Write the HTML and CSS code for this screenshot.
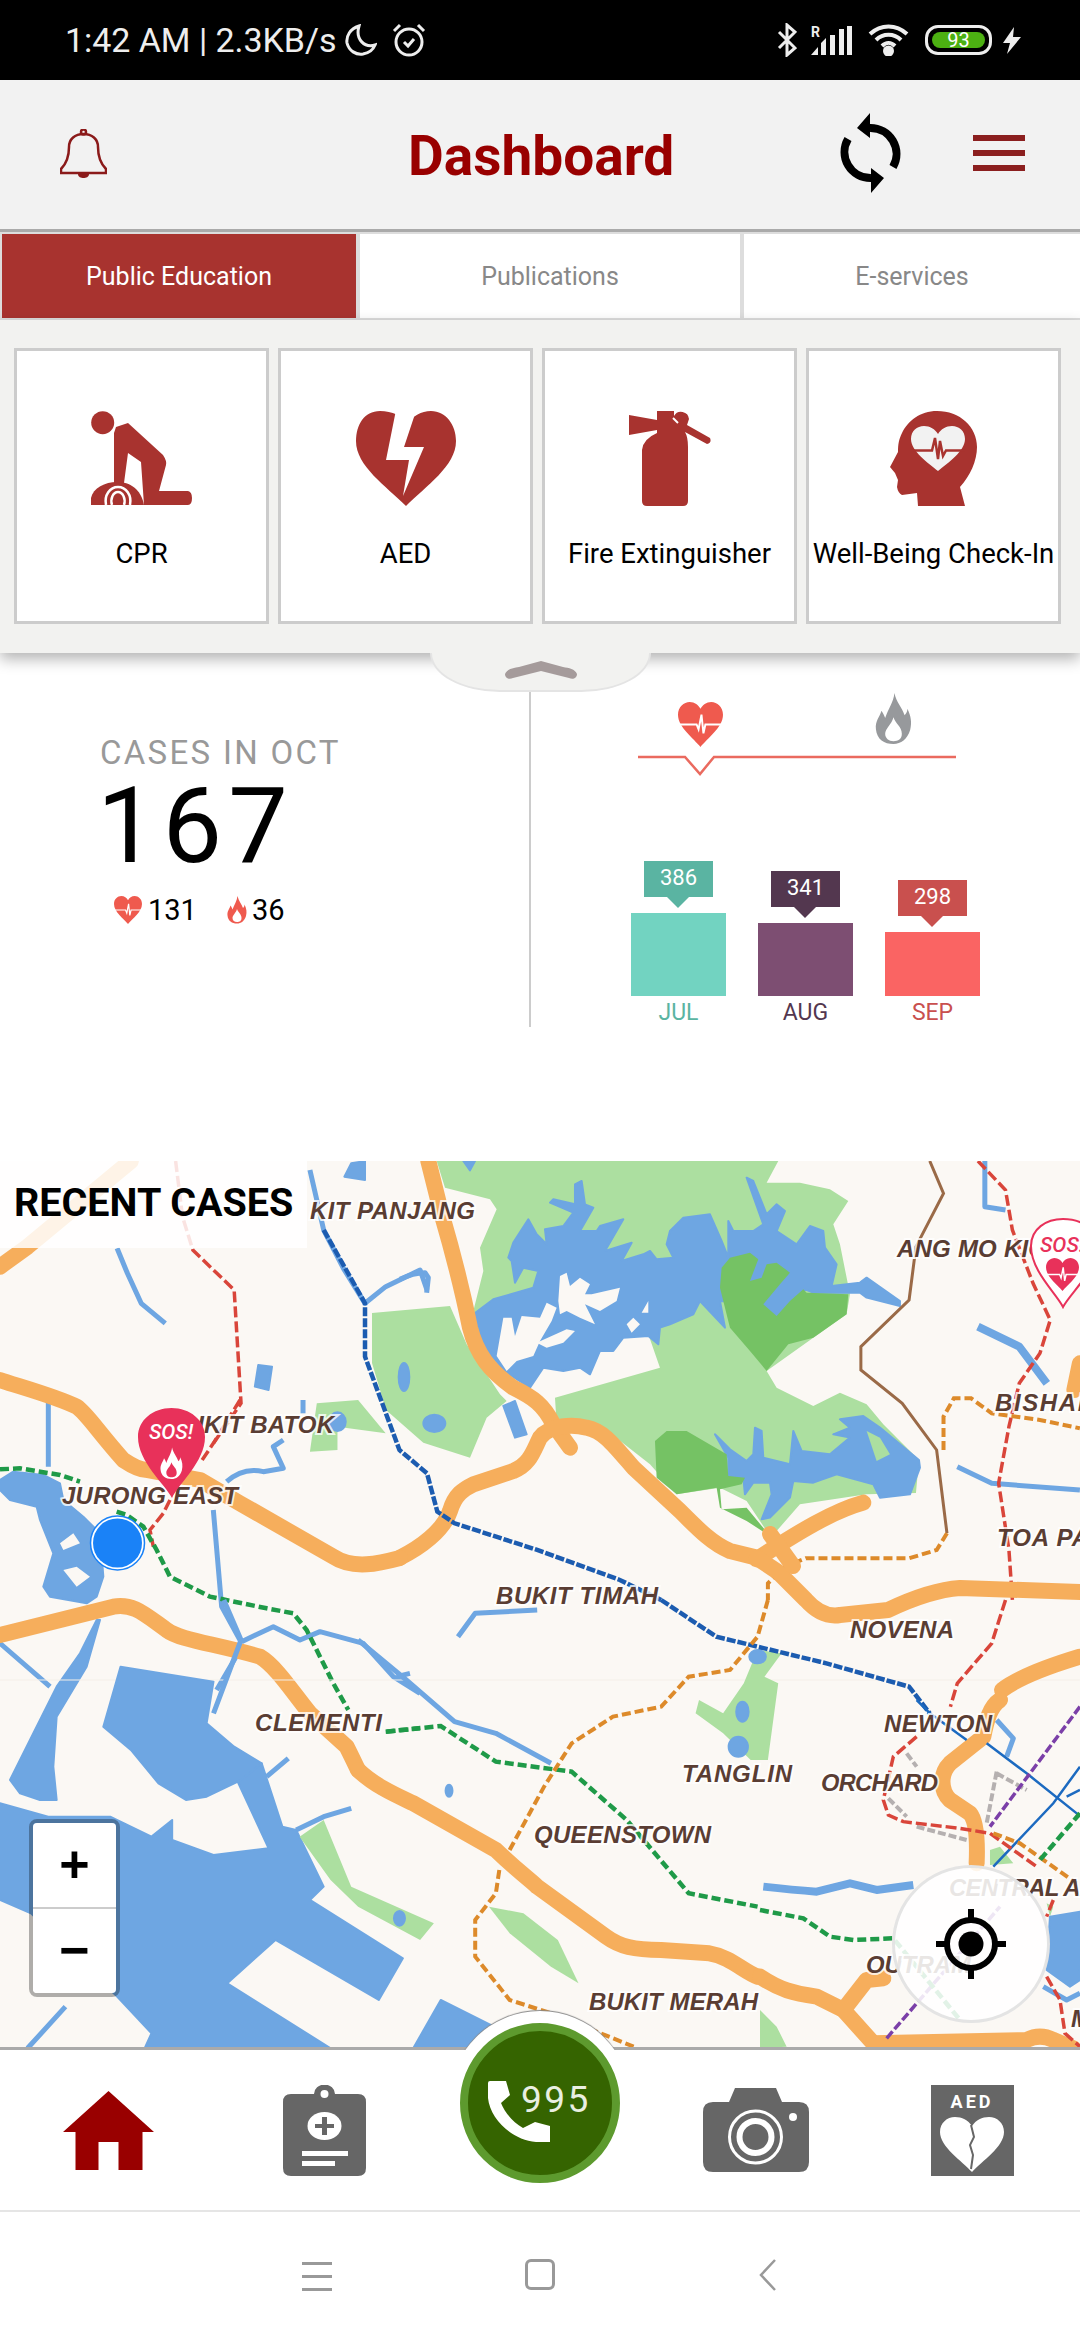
FILE: index.html
```html
<!DOCTYPE html>
<html lang="en">
<head>
    <meta charset="UTF-8">
    <meta name="viewport" content="width=device-width, initial-scale=1.0">
    <title>Dashboard</title>
    <link rel="stylesheet" href="styles.css">
</head>
<body>
    <svg class="defs" width="0" height="0">
        <symbol id="ecg-heart" viewBox="0 0 46 46">
            <path d="M23 46 C16 37 0 26 0 13 C0 5 6 0 12 0 C17 0 21 3 23 7 C25 3 29 0 34 0 C40 0 46 5 46 13 C46 26 30 37 23 46Z"/>
            <path class="ecg" d="M0 23 H19 L21 28 L24 13 L26 32 L28 23 H46"/>
        </symbol>
        <symbol id="flame" viewBox="0 0 40 56">
            <path fill-rule="evenodd" d="M21 0 C23 10 29 15 32 24 C34 22 35 20 35 17 C39 25 40 32 38 40 C35 50 28 55 20 55 C10 55 2 50 1 39 C0 30 5 26 7 19 C9 22 10 24 11 27 C14 18 20 10 21 0Z M20 26 C22 33 29 36 29 44 C29 50 25 52 20 52 C15 52 11 49 11 44 C11 38 18 34 20 26Z"/>
        </symbol>
    </svg>

    <!-- Status bar -->
    <div class="status-bar">
        <div class="status-left">
            <span class="status-text">1:42 AM | 2.3KB/s</span>
            <svg class="st-moon" viewBox="0 0 33 32"><path d="M15 2 C6 5 2 12 3 19 C5 27 12 31 19 30 C25 29 29 26 31 21 C21 24 11 16 15 2Z"/></svg>
            <svg class="st-alarm" viewBox="0 0 34 34"><circle cx="17" cy="19" r="13"/><path d="M12 19 L16 23 L22 16 M2 8 L8 2 M32 8 L26 2"/></svg>
        </div>
        <div class="status-right">
            <svg class="st-bt" viewBox="0 0 20 34"><path d="M2 9 L18 25 L10 32 V2 L18 9 L2 25"/></svg>
            <div class="st-signal">
                <span class="st-r">R</span>
                <svg viewBox="0 0 41 29"><path d="M0 29 L7 21 V29Z M10 29 V17 L15 12 V29Z M19 29 V9 H24 V29Z M28 29 V3 H33 V29Z M36 29 V0 H41 V29Z"/></svg>
            </div>
            <svg class="st-wifi" viewBox="0 0 41 32"><path d="M2 10 C13 0 28 0 39 10 M8 16 C15 9 26 9 33 16 M14 22 C18 18 23 18 27 22"/><circle cx="20.500" cy="27" r="3.500"/></svg>
            <div class="st-battery"><span class="st-level">93</span></div>
            <svg class="st-bolt" viewBox="0 0 18 27"><path d="M11 0 L0 16 H7 L4 27 L18 10 H10Z"/></svg>
        </div>
    </div>

    <!-- Header -->
    <header class="app-header">
        <svg class="bell" viewBox="0 0 47 49">
            <circle cx="23.500" cy="3" r="2.500"/>
            <path d="M1 44 H46 V40 C40 34 38 28 38 18 C38 10 32 5 23.500 5 C15 5 9 10 9 18 C9 28 7 34 1 40Z"/>
            <path class="clapper" d="M18 45 H29 C29 48 26 49 23.500 49 C21 49 18 48 18 45Z"/>
        </svg>
        <h1 class="app-title">Dashboard</h1>
        <svg class="sync" viewBox="0 0 61 80">
            <path class="sync-arc" d="M30 15 A26 26 0 0 1 53 54"/>
            <path class="sync-arc" d="M31 65 A26 26 0 0 1 8 26"/>
            <path d="M30 0 L17 15 L30 25Z M31 80 L44 65 L31 55Z"/>
        </svg>
        <div class="hamburger"><span></span><span></span><span></span></div>
    </header>

    <!-- Tabs -->
    <nav class="tabs">
        <div class="tab active">Public Education</div>
        <div class="tab">Publications</div>
        <div class="tab">E-services</div>
    </nav>

    <section class="panel">
        <div class="card">
            <svg class="card-icon" viewBox="0 0 101 96">
                <circle cx="11.700" cy="11.700" r="11.500"/>
                <path d="M25 16 L37 12 L72 44 Q76 50 75 54 L68 80 H97 Q101 81 101 87 Q101 94 97 94 H53 L50 51 L37 42 L33 72 H23 V22Z"/>
                <path d="M0 94 V87 C2 77 14 71 26 71 C39 71 50 78 53 94Z"/>
                <path class="cut" d="M15 94 C13 84 19 76 27 76 C35 76 41 84 39 94 M21 94 C19 88 22 81 27 81 C32 81 35 88 33 94"/>
            </svg>
            <span class="card-label">CPR</span>
        </div>
        <div class="card">
            <svg class="card-icon" viewBox="0 0 100 96">
                <path d="M24 0 C8 0 0 14 0 30 C0 55 30 75 50 95 C70 75 100 55 100 30 C100 14 90 0 75 0 C65 0 57 5 52 12 C47 5 36 0 24 0Z"/>
                <path class="white" d="M40 -1 L30 49 H53 L47 85 L68 36 H48 L58 6 L50 -1Z"/>
            </svg>
            <span class="card-label">AED</span>
        </div>
        <div class="card">
            <svg class="card-icon" viewBox="0 0 82 96">
                <path d="M0 4 L28 9 V0 H45 V5 A8 8 0 0 1 60 8 L58 14 L81 27 Q83 32 78 33 L56 21 Q59 26 59 36 V90 Q59 95 54 95 H18 Q13 95 13 90 V39 Q14 28 28 22 V19 L0 24Z"/>
                <path class="nick" d="M44 7 L49 12"/>
            </svg>
            <span class="card-label">Fire Extinguisher</span>
        </div>
        <div class="card">
            <svg class="card-icon" viewBox="0 0 87 96">
                <path d="M47 0 C70 0 87 16 87 36 C87 50 80 65 70 76 L75 95 H28 L27 82 L12 84 Q8 82 7 76 L8 69 L5 62 L0 56 L8 41 C8 33 9 28 12 22 C18 10 30 0 47 0Z"/>
                <path class="pale" d="M48 60 C38 52 21 40 21 28 C21 20 27 15 34 15 C40 15 45 18 48 23 C51 18 56 15 62 15 C69 15 75 20 75 28 C75 40 58 52 48 60Z"/>
                <path class="pulse" d="M21 39.500 H42 L45 27 L48 48 L50 30 L53 45 L56 39.500 H75"/>
            </svg>
            <span class="card-label">Well-Being Check-In</span>
        </div>
    </section>

    <div class="handle">
        <svg class="handle-mark" viewBox="0 0 72 18"><path d="M0 13 C2 8 8 7 14 6 L36 0 L58 6 C64 7 70 8 72 13 C72 17 68 19 64 17 L36 10 L8 17 C4 19 0 17 0 13Z"/></svg>
    </div>

    <!-- Stats -->
    <section class="stats">
        <div class="stats-left">
            <div class="cases-title">CASES IN OCT</div>
            <div class="cases-total">167</div>
            <div class="cases-split">
                <svg class="split-heart"><use href="#ecg-heart"/></svg>
                <span>131</span>
                <svg class="split-flame"><use href="#flame"/></svg>
                <span>36</span>
            </div>
        </div>
        <div class="stats-right">
            <div class="type-icons">
                <svg class="type-heart"><use href="#ecg-heart"/></svg>
                <svg class="type-flame"><use href="#flame"/></svg>
            </div>
            <svg class="rail" viewBox="0 0 318 26"><path d="M0 7 H47 L62 24 L76 7 H318"/></svg>
            <div class="chart">
                <div class="col jul">
                    <div class="tip">386</div>
                    <div class="bar" style="height:83px"></div>
                    <div class="month">JUL</div>
                </div>
                <div class="col aug">
                    <div class="tip">341</div>
                    <div class="bar" style="height:73px"></div>
                    <div class="month">AUG</div>
                </div>
                <div class="col sep">
                    <div class="tip">298</div>
                    <div class="bar" style="height:64px"></div>
                    <div class="month">SEP</div>
                </div>
            </div>
        </div>
    </section>

    <!-- Map -->
    <section class="map">
        <svg class="map-art" viewBox="0 1161 1080 886" width="1080" height="886">
            <rect class="land" x="0" y="1161" width="1080" height="886"/>

            <!-- reserves -->
            <g transform="translate(400 1161) scale(.3333)">
                <path class="park" d="M110 0 L1135 0 L1100 65 L1200 65 L1290 85 L1345 120 L1300 190 L1320 250 L1350 400 L1340 460 L1240 530 L1100 630 L1130 680 L1240 735 L1320 695 L1400 730 L1450 790 L1557 897 L1548 996 L1400 1000 L1200 1030 L1130 1110 L1100 1110 L1040 1020 L960 980 L830 1000 L750 910 L610 800 L470 790 L465 710 L780 620 L745 520 L650 400 L490 340 L300 470 L290 590 L230 480 L220 450 L250 330 L240 260 L290 145 L270 115 L135 80Z"/>
                <path class="park" d="M-84 456 L150 435 L200 550 L300 700 L320 720 L260 770 L210 890 L70 845 L-42 747 L-84 606Z"/>

                <path class="water" d="M325 290 L340 245 L385 175 L410 220 L440 250 L435 205 L490 195 L520 155 L450 125 L460 115 L525 130 L525 70 L545 60 L555 130 L580 140 L540 210 L590 210 L600 195 L670 175 L615 270 L695 245 L665 300 L730 280 L750 270 L770 295 L820 290 L800 250 L810 210 L850 170 L930 160 L965 240 L985 290 L985 180 L1000 210 L1060 210 L1090 190 L1040 50 L1060 60 L1100 160 L1130 130 L1155 150 L1130 210 L1190 250 L1230 195 L1270 210 L1275 260 L1310 310 L1295 375 L1380 365 L1400 350 L1500 420 L1500 435 L1400 410 L1380 395 L1240 395 L1215 385 L1170 440 L1135 465 L1070 430 L960 420 L975 500 L900 420 L880 460 L810 490 L780 500 L775 550 L745 525 L670 530 L640 570 L600 570 L570 640 L540 620 L490 630 L430 620 L390 680 L320 635 L250 560 L220 460 L280 415 L400 380 L415 330 L370 320 L345 365 L335 300Z"/>
                <path class="island" d="M290 585 L310 470 L335 470 L345 525 L365 465 L420 470 L440 425 L470 440 L455 480 L420 540 L400 585 L350 600 L320 630Z"/>
                <path class="island" d="M480 345 L500 335 L510 375 L540 350 L570 370 L555 400 L575 400 L660 380 L650 420 L600 450 L555 430 L585 490 L540 470 L500 450 L480 460 L475 420Z"/>
                <path class="island" d="M410 545 L500 505 L525 510 L490 545 L440 560Z M680 490 L700 470 L720 490 L695 515Z M725 455 L745 420 L745 455Z"/>

                <path class="park-dark" d="M960 380 L965 320 L990 290 L1050 275 L1075 295 L1050 360 L1085 350 L1100 310 L1130 305 L1170 335 L1140 370 L1090 430 L1130 465 L1170 420 L1210 385 L1220 395 L1345 400 L1340 460 L1240 530 L1165 550 L1100 630 L1050 570 L990 500Z"/>

                <path class="water" d="M945 820 L990 865 L1040 900 L1060 880 L1065 800 L1085 810 L1090 890 L1170 910 L1180 810 L1205 870 L1290 880 L1350 830 L1300 820 L1350 800 L1320 775 L1390 765 L1440 800 L1557 897 L1560 920 L1530 1000 L1440 1010 L1420 970 L1310 940 L1240 965 L1180 960 L1170 1010 L1110 1070 L1085 1075 L1115 1000 L1110 965 L1060 965 L1035 1000 L1030 950 L985 945 L985 890Z"/>
                <path class="park" d="M1400 810 L1440 830 L1470 880 L1430 900Z"/>
                <path class="park-dark" d="M765 840 L800 810 L860 810 L980 880 L985 945 L1035 950 L1025 970 L960 985 L965 1045 L1040 1040 L1110 1125 L1040 1080 L960 1040 L950 980 L830 1000 L770 950Z"/>

                <ellipse class="water" cx="103" cy="787" rx="33" ry="26"/>
                <ellipse class="water" cx="12" cy="648" rx="16" ry="42"/>
                <path class="water" d="M310 735 L345 720 L380 820 L345 830Z M190 0 L225 0 L210 28Z"/>
                <path class="river" d="M0 355 Q40 335 75 335 L85 350 L80 395"/>

                <path class="road" d="M85 0 L125 160 C160 280 190 400 210 500 C230 580 270 630 340 680 C400 710 430 730 460 790 L510 860"/>
                <path class="road" d="M0 1190 C60 1160 130 1110 150 1050 C165 1000 190 985 220 970 L340 930 C390 910 400 870 420 830 C450 790 520 790 560 800 C610 810 640 850 700 920 L840 1050 C900 1110 940 1150 990 1170 L1070 1190"/>
                <path class="road" d="M1390 1025 C1300 1050 1200 1110 1070 1195"/>
            </g>

            <!-- north side -->
            <g transform="matrix(.6887 0 0 .3333 0 1150)">
                <path class="park" d="M450 905 L460 760 L520 750 L560 850 L490 830 L490 900Z"/>
                <path class="water" d="M375 645 L395 650 L390 720 L370 710Z M510 40 L530 33 L530 90 L500 80Z"/>
                <ellipse class="water" cx="490" cy="815" rx="12" ry="28"/>
                <path class="river" d="M170 295 L185 370 L205 460 L240 520"/>
                <path class="river" d="M450 60 L470 240 L500 360 L530 460 L560 410 L610 360 L620 420"/>
                <path class="river" d="M1390 950 L1440 1000 L1568 1020 M1430 33 L1430 170 L1460 180"/>
                <path class="river-wide" d="M1420 530 L1480 590 L1520 700"/>
                <path class="river" d="M440 750 V790"/>
                <path class="road" d="M0 350 L40 290 L190 33"/>
                <path class="road" d="M1568 640 L1560 720"/>

                <path class="rail-red" d="M1420 33 L1460 120 L1470 240 L1500 400 L1525 510 L1510 610 L1480 700 L1465 830 L1450 1000 L1465 1200 L1470 1350"/>
                <path class="rail-red" d="M255 33 L265 200 L280 300 L340 420 L350 760 L310 880"/>
                <path class="rail-brown" d="M1350 33 L1370 130 L1330 290 L1320 450 L1250 590 L1250 660 L1310 760 L1360 900 L1375 1150"/>
                <path class="rail-orange" d="M1370 900 L1370 800 L1385 745 L1410 745 L1440 790 L1510 810 L1568 835 M1375 1150 L1360 1200 L1320 1225 L1170 1225 L1140 1250 L1115 1300 L1115 1350"/>
                <path class="rail-blue" d="M470 240 L530 460 L530 620 L580 900 L620 970 L635 1085 L660 1120 L780 1200 L900 1290 L960 1350"/>
            </g>

            <!-- jurong -->
            <g transform="translate(0 1400) scale(.3333)">
                <path class="water" d="M0 240 L40 215 L130 225 L180 250 L190 300 L250 350 L300 400 L310 530 L290 590 L260 610 L150 590 L130 560 L160 460 L120 360 L110 320 L30 300 L0 270Z"/>
                <path class="island" d="M180 430 L220 400 L240 430 L190 450Z M190 510 L230 500 L270 530 L230 560Z"/>
                <path class="water" d="M290 660 L240 760 L170 860 L100 1000 L30 1140 L60 1180 L120 1200 L170 1200 L160 1100 L170 950 L260 800 L300 660Z"/>
                <path class="river" d="M145 0 V200 M640 330 L665 620 L720 720 M680 245 Q730 200 790 215 L850 205 L820 140 L850 120 M725 725 L820 680 L900 720 L960 695 L1090 730 L1180 830 L1260 880 M1190 830 L1230 820 M0 730 L150 860 M720 750 L650 870 M800 1130 L865 1075"/>

                <path class="road" d="M0 -60 C60 -40 170 -10 230 20 C260 40 290 90 370 180 C400 200 420 210 440 210 L600 240 L720 310 L1000 470 C1060 510 1140 490 1200 474"/>
                <path class="road" d="M0 705 L340 620 C400 610 430 640 500 690 C540 720 640 730 780 770 C830 800 880 880 930 940 L1040 1040 Q1060 1080 1074 1110"/>

                <path class="rail-red" d="M720 0 L640 130 L600 190 M510 300 L490 340 L450 390 L460 440"/>
                <path class="rail-green" d="M0 208 L60 205 L180 225 L240 245 M350 335 L380 345 L430 380 L470 450 L510 530 L630 590 L800 625 L880 640 L920 690 L1000 850 L1045 930 M1160 995 L1260 985"/>
            </g>

            <!-- south side -->
            <g transform="matrix(.6887 0 0 .3333 0 1600)">
                <path class="seam" d="M0 240 H1568"/>
                <path class="water" d="M0 610 L70 650 L160 650 L220 710 L250 660 L250 720 L310 765 L390 745 L345 545 L380 490 L410 680 L430 690 L470 860 L450 900 L585 1075 L550 1200 L400 1020 L330 1150 L480 1345 L210 1345 L220 1300 L170 1190 L45 940 L0 900Z"/>
                <path class="water" d="M600 1345 L640 1200 L780 1345Z"/>
                <path class="water" d="M175 200 L310 245 L300 370 L340 440 L380 490 L350 540 L300 590 L270 600 L230 550 L190 450 L150 380Z"/>
                <path class="river" d="M325 0 L350 120 L310 340 M520 120 L590 240 L660 365 L720 400 L800 490 M665 110 L690 40 L780 30 M95 1220 L40 1345 M430 690 L470 650 L510 625"/>
                <ellipse class="water" cx="652" cy="572" rx="5" ry="18"/>

                <path class="park" d="M435 710 L470 660 L510 860 L630 970 L610 1020 L520 920 L480 840Z"/>
                <path class="park" d="M1100 150 L1135 160 L1110 230 L1130 250 L1115 480 L1090 480 L1050 400 L1010 340 L1015 300 L1050 340 L1080 250Z"/>
                <path class="park" d="M710 920 L760 940 L810 1020 L840 1150 L800 1100 L740 1000Z"/>
                <ellipse class="water" cx="1100" cy="170" rx="12" ry="20"/>
                <ellipse class="water" cx="1078" cy="335" rx="9" ry="30"/>
                <ellipse class="water" cx="1072" cy="440" rx="14" ry="30"/>
                <ellipse class="water" cx="580" cy="955" rx="8" ry="22"/>

                <path class="road" d="M520 510 C545 560 580 590 600 610 L720 750 C750 810 770 840 780 860 L880 1010 C900 1040 920 1050 960 1050 L1030 1060 C1060 1070 1080 1115 1100 1130"/>
                <path class="road" d="M1568 170 C1520 200 1480 230 1455 270"/>

                <path class="rail-blue" d="M960 0 L1040 110 L1200 190 L1320 260 L1350 340"/>
                <path class="rail-green" d="M560 395 L640 378 L720 485 L830 515 L910 660 L1000 880 L1100 920"/>
                <path class="rail-orange" d="M1115 0 L1100 110 L1060 210 L1000 230 L960 320 L890 350 L830 430 L790 560 L740 750 M725 810 L720 880 L690 960 L690 1070 L740 1200 L800 1240 L920 1340"/>
                <path class="rail-red" d="M1460 0 L1440 130 L1390 250 L1380 320"/>
            </g>

            <!-- centre -->
            <g transform="translate(760 1700) scale(.3333)">
                <path class="park" d="M690 450 L720 440 L760 490 L690 495Z M860 610 L880 620 L870 650Z M0 930 L50 980 L80 1040 L0 1045Z"/>
                <path class="water" d="M870 650 L960 635 V840 L930 860 L860 810Z"/>
                <path class="river-wide" d="M10 560 Q100 570 170 575 L270 550 L350 570 L460 555"/>
                <path class="river" d="M710 60 L760 115 L740 170 M850 860 L920 900 L960 880"/>

                <path class="road" d="M720 0 C690 20 680 60 670 110 L570 190 C540 220 540 270 570 300 L630 340 Q655 370 650 490"/>
                <path class="road" d="M0 830 C60 870 100 880 170 890 L250 930 L340 1030 L800 1020 Q840 1000 880 1020 L940 1045"/>
                <path class="road" d="M250 930 L320 840 L370 835"/>

                <path class="line-blue" d="M470 0 L510 40 L620 120 M680 130 L800 220 L1000 380 M960 200 L880 310 L700 500 M920 290 L960 270"/>
                <path class="rail-grey" d="M440 160 L470 200 M385 295 L440 350 M470 380 L620 420 M710 215 L680 370 M710 220 L800 270"/>
                <path class="rail-red" d="M470 110 L400 170 L370 300 L385 345 L430 365 L600 385 L690 400 L830 500 M880 600 L860 650 M860 830 L900 900 L915 1000 L960 1040"/>
                <path class="rail-orange" d="M700 400 L780 430 L950 550"/>
                <path class="rail-purple" d="M960 20 L690 380 M380 1015 L720 620"/>
                <path class="rail-green" d="M960 340 L840 480 M0 630 L130 655 L210 710 L280 720 L400 715 L600 960"/>
            </g>

            <path class="road" d="M757 1558 L778 1572 L806 1600 Q822 1618 840 1615 L888 1610 Q930 1590 960 1588 L1080 1592"/>
            <path class="road" d="M770 1534 L793 1566"/>

            <g class="map-labels">
                <text x="310" y="1219" textLength="165">KIT PANJANG</text>
                <text x="897" y="1257" textLength="150">ANG MO KIO</text>
                <text x="169" y="1433" textLength="165">BUKIT BATOK</text>
                <text x="62" y="1504" textLength="176">JURONG EAST</text>
                <text x="995" y="1411" textLength="100">BISHAN</text>
                <text x="997" y="1546" textLength="145">TOA PAYOH</text>
                <text x="496" y="1604" textLength="162">BUKIT TIMAH</text>
                <text x="850" y="1638" textLength="104">NOVENA</text>
                <text x="255" y="1731" textLength="127">CLEMENTI</text>
                <text x="884" y="1732" textLength="108">NEWTON</text>
                <text x="682" y="1782" textLength="110">TANGLIN</text>
                <text x="821" y="1791" textLength="117">ORCHARD</text>
                <text x="534" y="1843" textLength="177">QUEENSTOWN</text>
                <text x="949" y="1896" textLength="180">CENTRAL AREA</text>
                <text x="866" y="1973" textLength="105">OUTRAM</text>
                <text x="589" y="2010" textLength="169">BUKIT MERAH</text>
                <text x="1071" y="2027">M</text>
            </g>

            <!-- you are here -->
            <circle class="me-ring" cx="117.500" cy="1543" r="27"/>
            <circle class="me-dot" cx="117.500" cy="1543" r="24.500"/>

            <!-- fire case -->
            <path class="pin" d="M172 1498 C165 1484 138 1462 138 1437 C138 1420 153 1408 171.500 1408 C190 1408 205 1420 205 1437 C205 1462 178 1484 172 1498Z"/>
            <text class="pin-text" x="171" y="1439" text-anchor="middle">SOS!</text>
            <svg x="160" y="1447" width="23" height="33" class="pin-flame"><use href="#flame"/></svg>

            <!-- heart case -->
            <path class="pin-light" d="M1063 1307 C1056 1293 1031 1271 1031 1246 C1031 1229 1046 1219 1063 1219 C1082 1219 1097 1229 1097 1246 C1097 1271 1070 1293 1063 1307Z"/>
            <text class="pin-text-red" x="1040" y="1252">SOS!</text>
            <svg x="1046" y="1258" width="33" height="33" class="pin-heart"><use href="#ecg-heart"/></svg>
        </svg>

        <div class="map-title">RECENT CASES</div>

        <div class="zoom-box">
            <div class="zoom-btn">+</div>
            <div class="zoom-btn">−</div>
        </div>

        <div class="locate">
            <svg viewBox="0 0 70 70"><circle cx="35" cy="35" r="24"/><circle class="locate-dot" cx="35" cy="35" r="12.500"/><path d="M35 0 V11 M35 59 V70 M0 35 H11 M59 35 H70"/></svg>
        </div>
    </section>

    <!-- Bottom nav -->
    <footer class="bottom-nav">
        <div class="nav-item">
            <svg class="nav-home" viewBox="0 0 91 79"><path d="M45.500 0 L91 41 H79.500 V79 H55.500 V51 H35.500 V79 H12.500 V41 H0Z"/></svg>
        </div>
        <div class="nav-item">
            <svg class="nav-badge" viewBox="0 0 83 91">
                <path d="M8 9 H31 A10 9 0 0 1 52 9 H75 Q83 9 83 17 V83 Q83 91 75 91 H8 Q0 91 0 83 V17 Q0 9 8 9Z"/>
                <circle class="white" cx="41.500" cy="9" r="4"/>
                <ellipse class="white" cx="41.500" cy="41" rx="17" ry="14"/>
                <path d="M39 32 H44 V39 H51 V43 H44 V50 H39 V43 H32 V39 H39Z"/>
                <path class="white" d="M19 66 H65 V71 H19Z M19 76 H52 V81 H19Z"/>
            </svg>
        </div>
        <div class="nav-item"></div>
        <div class="nav-item">
            <svg class="nav-camera" viewBox="0 0 106 84">
                <path d="M10 14 H26 L32 0 H73 L79 14 H96 Q106 14 106 24 V74 Q106 84 96 84 H10 Q0 84 0 74 V24 Q0 14 10 14Z"/>
                <circle class="lens" cx="52.500" cy="49" r="26"/>
                <circle class="lens-in" cx="52.500" cy="49" r="16"/>
                <circle class="white" cx="90" cy="29" r="4"/>
            </svg>
        </div>
        <div class="nav-item">
            <div class="nav-aed">
                <span class="aed-text">AED</span>
                <svg viewBox="0 0 64 55"><path class="white" d="M32 55 C22 44 0 30 0 15 C0 6 7 0 15 0 C22 0 28 3 32 9 C36 3 42 0 49 0 C57 0 64 6 64 15 C64 30 42 44 32 55Z"/><path class="crack" d="M31 8 L34 20 L30 28 L33 38 L31 52"/></svg>
            </div>
        </div>

        <div class="call-halo"></div>
        <div class="call-btn">
            <svg class="call-phone" viewBox="0 0 62 61"><path d="M0 2 Q0 0 2 0 H18 L22 14 L13 22 C17 32 25 41 35 47 L47 41 L62 45 V61 H48 C24 59 2 38 0 17Z"/></svg>
            <span class="call-number">995</span>
        </div>
    </footer>

    <!-- Android keys -->
    <div class="system-nav">
        <div class="key-menu"><span></span><span></span><span></span></div>
        <div class="key-home"></div>
        <svg class="key-back" viewBox="0 0 18 32"><path d="M16 1 L2 16 L16 31"/></svg>
    </div>
</body>
</html>
```

FILE: styles.css
```css
/* General */
* {
    box-sizing: border-box;
}

body {
    margin: 0;
    width: 1080px;
    height: 2340px;
    overflow: hidden;
    background: #ffffff;
    font-family: Roboto, sans-serif;
    color: #000000;
}

svg {
    display: block;
}

.defs {
    position: absolute;
}

.white {
    fill: #ffffff;
}

/* Status bar */
.status-bar {
    height: 80px;
    background: #000000;
    color: #eeeeee;
    display: flex;
    justify-content: space-between;
    align-items: center;
    padding: 0 59px 0 65px;
}

.status-left,
.status-right {
    display: flex;
    align-items: center;
}

.status-text {
    font-size: 34px;
    letter-spacing: -0.05px;
    white-space: nowrap;
    width: 279px;
}

.st-moon {
    width: 33px;
    height: 32px;
    fill: none;
    stroke: #eeeeee;
    stroke-width: 3;
}

.st-alarm {
    width: 34px;
    height: 34px;
    margin-left: 15px;
    fill: none;
    stroke: #eeeeee;
    stroke-width: 3;
}

.st-bt {
    width: 20px;
    height: 34px;
    fill: none;
    stroke: #eeeeee;
    stroke-width: 3;
}

.st-signal {
    position: relative;
    width: 41px;
    height: 29px;
    margin-left: 14px;
    fill: #eeeeee;
}

.st-r {
    position: absolute;
    left: 0;
    top: -2px;
    font-size: 14px;
    font-weight: 700;
}

.st-wifi {
    width: 41px;
    height: 32px;
    margin-left: 16px;
    fill: #eeeeee;
    stroke: #eeeeee;
    stroke-width: 4;
}

.st-wifi path {
    fill: none;
}

.st-battery {
    width: 67px;
    height: 30px;
    margin-left: 16px;
    padding: 4px;
    border: 3px solid #eeeeee;
    border-radius: 13px;
    display: flex;
}

.st-level {
    flex: 1;
    background: #4cb012;
    border-radius: 8px;
    color: #ffffff;
    font-size: 20px;
    line-height: 16px;
    text-align: center;
}

.st-bolt {
    width: 18px;
    height: 27px;
    margin-left: 11px;
    fill: #eeeeee;
}

/* Header */
.app-header {
    position: relative;
    height: 152px;
    background: #f2f2f2;
    border-bottom: 3px solid #aaaaaa;
    display: flex;
    align-items: center;
    padding: 0 55px 0 60px;
}

.bell {
    width: 47px;
    height: 49px;
    margin-top: -3px;
    fill: none;
    stroke: #8b1a1a;
    stroke-width: 2.5;
}

.bell .clapper {
    fill: #8b1a1a;
    stroke: none;
}

.app-title {
    margin: 2px 0 0 301px;
    font-size: 55px;
    font-weight: 700;
    line-height: 60px;
    color: #990000;
    white-space: nowrap;
    width: 432px;
}

.sync {
    width: 61px;
    height: 80px;
    margin-top: -3px;
    fill: #000000;
}

.sync-arc {
    fill: none;
    stroke: #000000;
    stroke-width: 8;
}

.hamburger {
    margin-left: 72px;
    width: 52px;
    display: flex;
    flex-direction: column;
    gap: 9px;
    margin-top: -3px;
}

.hamburger span {
    height: 6px;
    background: #8b1f1f;
}

/* Tabs */
.tabs {
    display: grid;
    grid-template-columns: 354px 380px 336px;
    gap: 4px;
    height: 88px;
    padding: 2px 0 2px 2px;
    background: #dddddd;
}

.tab {
    background: #ffffff;
    color: #888888;
    font-size: 25px;
    display: flex;
    align-items: center;
    justify-content: center;
}

.tab.active {
    background: #a8332f;
    color: #ffffff;
}

/* Education panel */
.panel {
    position: relative;
    z-index: 3;
    height: 333px;
    padding: 28px 19px 29px 14px;
    background: #f2f2f0;
    display: grid;
    grid-template-columns: repeat(4, 255px);
    gap: 9px;
    box-shadow: 0 6px 14px rgba(0, 0, 0, 0.3);
}

.card {
    background: #ffffff;
    border: 3px solid #cccccc;
    display: flex;
    flex-direction: column;
    align-items: center;
    padding-top: 60px;
}

.card-icon {
    height: 96px;
    fill: #a8332f;
}

.card-label {
    margin-top: 31px;
    font-size: 27.5px;
    line-height: 32px;
    white-space: nowrap;
}

.card-icon .cut {
    fill: none;
    stroke: #ffffff;
    stroke-width: 2.5;
}

.card-icon .nick {
    fill: none;
    stroke: #ffffff;
    stroke-width: 2;
}

.card-icon .pale {
    fill: #f2f2f2;
}

.card-icon .pulse {
    fill: none;
    stroke: #a8332f;
    stroke-width: 2.5;
}

.handle {
    position: absolute;
    z-index: 4;
    left: 430px;
    top: 653px;
    width: 221px;
    height: 39px;
    background: #f2f2f0;
    border: 2px solid #e4e4e4;
    border-top: none;
    border-radius: 0 0 70px 70px / 0 0 39px 39px;
    display: flex;
    justify-content: center;
    padding-top: 8px;
}

.handle-mark {
    width: 72px;
    height: 18px;
    fill: #a59b9b;
}

/* Stats */
.stats {
    height: 508px;
    display: flex;
    align-items: flex-start;
}

.stats-left {
    width: 529px;
    padding: 80px 0 0 100px;
}

.cases-title {
    font-size: 33px;
    line-height: 40px;
    letter-spacing: 2.3px;
    color: #999999;
    white-space: nowrap;
}

.cases-total {
    margin: 3px 0 0 -3px;
    font-size: 106px;
    line-height: 100px;
    letter-spacing: 6px;
    color: #000000;
}

.cases-split {
    margin: 17px 0 0 14px;
    display: flex;
    align-items: center;
    font-size: 29px;
    line-height: 34px;
}

.split-heart {
    width: 28px;
    height: 28px;
    fill: #ef5a4e;
    margin-right: 6px;
}

.split-flame {
    width: 20px;
    height: 28px;
    fill: #ef5a4e;
    margin: 0 5px 0 30px;
}

.ecg {
    fill: none;
    stroke: #ffffff;
    stroke-width: 2;
}

.stats-right {
    width: 551px;
    height: 374px;
    border-left: 2px solid #cccccc;
    padding-top: 40px;
}

.type-icons {
    height: 57px;
    display: flex;
    align-items: flex-start;
    padding-left: 147px;
}

.type-heart {
    width: 45px;
    height: 45px;
    margin-top: 9px;
    fill: #ef5a4e;
}

.type-flame {
    width: 37px;
    height: 52px;
    margin-left: 152px;
    fill: #97999c;
}

.rail {
    width: 318px;
    height: 26px;
    margin-left: 107px;
    fill: none;
    stroke: #ea6a5f;
    stroke-width: 2.5;
}

.chart {
    margin: 85px 0 0 100px;
    height: 165px;
    display: flex;
    align-items: flex-end;
    gap: 32px;
}

.col {
    width: 95px;
    display: flex;
    flex-direction: column;
    align-items: center;
}

.tip {
    position: relative;
    width: 69px;
    height: 36px;
    margin-bottom: 16px;
    color: #ffffff;
    font-size: 22px;
    line-height: 34px;
    text-align: center;
}

.tip::after {
    content: "";
    position: absolute;
    left: 23px;
    top: 36px;
    border-style: solid;
    border-width: 11px 11.5px 0;
    border-color: inherit;
    border-left-color: transparent;
    border-right-color: transparent;
}

.bar {
    width: 95px;
}

.month {
    margin-top: 4px;
    font-size: 23px;
    line-height: 26px;
}

.jul .tip { background: #5ab4a2; border-color: #5ab4a2; }
.jul .bar { background: #72d3c1; }
.jul .month { color: #5ab4a2; }

.aug .tip { background: #53374f; border-color: #53374f; }
.aug .bar { background: #7d4e72; }
.aug .month { color: #53374f; }

.sep .tip { background: #c9504e; border-color: #c9504e; }
.sep .bar { background: #fa6463; }
.sep .month { color: #c9504e; }

/* Map */
.map {
    position: relative;
    height: 886px;
    overflow: hidden;
}

.map-art path,
.map-art ellipse {
    vector-effect: non-scaling-stroke;
}

.land { fill: #fbf8f4; }
.island { fill: #fbf8f4; }
.park { fill: #acdfa0; }
.park-dark { fill: #75c264; }
.water { fill: #6ea6e2; stroke: #6ea6e2; stroke-width: 2; stroke-linejoin: round; }
.seam { fill: none; stroke: #f4efe8; stroke-width: 1; }

.river { fill: none; stroke: #6ea6e2; stroke-width: 5; stroke-linejoin: round; }
.river-wide { fill: none; stroke: #6ea6e2; stroke-width: 8; stroke-linejoin: round; }
.road { fill: none; stroke: #f6ae5c; stroke-width: 16; stroke-linejoin: round; stroke-linecap: round; }

.rail-red { fill: none; stroke: #d9453a; stroke-width: 3.5; stroke-dasharray: 11 4; }
.rail-brown { fill: none; stroke: #9a6a47; stroke-width: 3; }
.rail-orange { fill: none; stroke: #dd8a2a; stroke-width: 4; stroke-dasharray: 9 4; }
.rail-green { fill: none; stroke: #1f9a48; stroke-width: 4.5; stroke-dasharray: 9 4; }
.rail-blue { fill: none; stroke: #1c5cb0; stroke-width: 4.5; stroke-dasharray: 9 2; }
.rail-purple { fill: none; stroke: #7b3fa8; stroke-width: 3.5; stroke-dasharray: 9 3; }
.rail-grey { fill: none; stroke: #b5b0b0; stroke-width: 4; stroke-dasharray: 8 3; }
.line-blue { fill: none; stroke: #1c6ac0; stroke-width: 2.5; }

.map-labels text {
    font-family: "Liberation Sans", sans-serif;
    font-size: 24px;
    font-weight: 700;
    font-style: italic;
    fill: #5a3d33;
    stroke: #ffffff;
    stroke-width: 4px;
    stroke-opacity: 0.8;
    paint-order: stroke;
}

.me-ring { fill: #ffffff; stroke: #1a82f7; stroke-width: 1.5; }
.me-dot { fill: #1a82f7; }

.pin { fill: #e8315a; }
.pin-text {
    font-family: Roboto, sans-serif;
    font-size: 21px;
    font-weight: 500;
    font-style: italic;
    fill: #ffffff;
}
.pin-flame { fill: #ffffff; }
.pin-light { fill: #ffffff; stroke: #e8315a; stroke-width: 2; }
.pin-text-red {
    font-family: Roboto, sans-serif;
    font-size: 21px;
    font-weight: 500;
    font-style: italic;
    fill: #e8315a;
}
.pin-heart { fill: #e8315a; }

.map-title {
    position: absolute;
    left: 0;
    top: 0;
    width: 307px;
    height: 87px;
    padding: 20px 0 0 14px;
    background: rgba(255, 255, 255, 0.85);
    font-size: 39.5px;
    line-height: 44px;
    font-weight: 700;
    white-space: nowrap;
}

.zoom-box {
    position: absolute;
    left: 29px;
    top: 658px;
    width: 91px;
    height: 178px;
    border: 4px solid rgba(0, 0, 0, 0.3);
    border-radius: 8px;
    background-clip: padding-box;
    display: flex;
    flex-direction: column;
}

.zoom-btn {
    flex: 1;
    background: #ffffff;
    font-family: "Liberation Sans", sans-serif;
    font-size: 52px;
    font-weight: 700;
    line-height: 82px;
    text-align: center;
}

.zoom-btn:first-child {
    border-bottom: 2px solid #cccccc;
    border-radius: 4px 4px 0 0;
}

.zoom-btn:last-child {
    border-radius: 0 0 4px 4px;
}

.locate {
    position: absolute;
    left: 892px;
    top: 704px;
    width: 158px;
    height: 158px;
    border-radius: 50%;
    background: rgba(255, 255, 255, 0.87);
    border: 3px solid rgba(225, 225, 225, 0.9);
    display: flex;
    align-items: center;
    justify-content: center;
}

.locate svg {
    width: 70px;
    height: 70px;
    fill: none;
    stroke: #000000;
    stroke-width: 6;
}

.locate .locate-dot {
    fill: #000000;
    stroke: none;
}

/* Bottom nav */
.bottom-nav {
    position: relative;
    z-index: 2;
    height: 165px;
    background: #ffffff;
    border-top: 3px solid #aaaaaa;
    border-bottom: 2px solid #e5e5e5;
    display: grid;
    grid-template-columns: repeat(5, 216px);
}

.nav-item {
    display: flex;
    align-items: center;
    justify-content: center;
}

.nav-home {
    width: 91px;
    height: 79px;
    fill: #990000;
}

.nav-badge {
    width: 83px;
    height: 91px;
    fill: #666666;
}

.nav-camera {
    width: 106px;
    height: 84px;
    fill: #666666;
}

.nav-camera .lens {
    fill: none;
    stroke: #ffffff;
    stroke-width: 3;
}

.nav-camera .lens-in {
    fill: #666666;
    stroke: #ffffff;
    stroke-width: 6;
}

.nav-aed {
    width: 83px;
    height: 91px;
    background: #666666;
    display: flex;
    flex-direction: column;
    align-items: center;
    padding-top: 7px;
}

.aed-text {
    color: #ffffff;
    font-size: 18px;
    line-height: 20px;
    font-weight: 700;
    letter-spacing: 3px;
    margin-bottom: 5px;
}

.nav-aed svg {
    width: 64px;
    height: 55px;
}

.crack {
    fill: none;
    stroke: #666666;
    stroke-width: 2;
}

/* only the part above the bar shows */
.call-halo {
    position: absolute;
    left: 449px;
    top: -42px;
    width: 182px;
    height: 42px;
    overflow: hidden;
    padding-top: 3px;
}

.call-halo::before {
    content: "";
    display: block;
    width: 182px;
    height: 182px;
    border-radius: 50%;
    background: #ffffff;
    box-shadow: 0 -1px 1px #888888;
}

.call-btn {
    position: absolute;
    left: 460px;
    top: -27px;
    width: 160px;
    height: 160px;
    border-radius: 50%;
    background: #356400;
    border: 8px solid #5d9a2e;
}

.call-phone {
    position: absolute;
    left: 20px;
    top: 50px;
    width: 62px;
    height: 61px;
    fill: #ffffff;
}

.call-number {
    position: absolute;
    left: 53px;
    top: 47px;
    font-size: 37px;
    line-height: 44px;
    letter-spacing: 2.5px;
    color: #e9efe2;
}

/* Android keys */
.system-nav {
    position: relative;
    height: 128px;
    background: #ffffff;
}

.key-menu {
    position: absolute;
    left: 302px;
    top: 50px;
    width: 30px;
    display: flex;
    flex-direction: column;
    gap: 10px;
}

.key-menu span {
    height: 3px;
    background: #999999;
}

.key-home {
    position: absolute;
    left: 525px;
    top: 47px;
    width: 30px;
    height: 31px;
    border: 3px solid #999999;
    border-radius: 6px;
}

.key-back {
    position: absolute;
    left: 759px;
    top: 47px;
    width: 18px;
    height: 32px;
    fill: none;
    stroke: #999999;
    stroke-width: 2.500;
}
```
